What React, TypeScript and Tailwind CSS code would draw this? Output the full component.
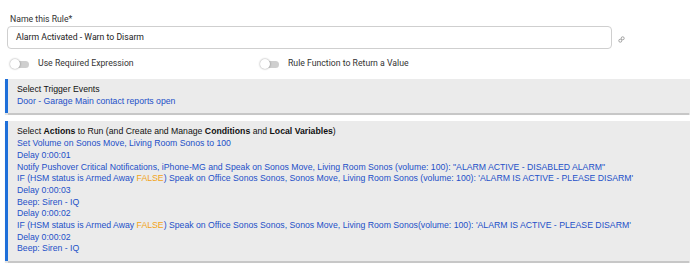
import React from 'react'

function Toggle({ label }: { label: string }) {
  return (
    <div className="flex items-center">
      <div className="relative w-[20px] h-[10px] flex items-center">
        <div className="ml-[3px] w-[16px] h-[7px] rounded-full bg-[#cfcfcf]" />
        <div className="absolute left-0 top-0 w-[10px] h-[10px] rounded-full bg-white shadow-[0_0_2px_rgba(0,0,0,0.45)]" />
      </div>
      <span className="ml-[8px] text-[8.7px] text-[#333]">{label}</span>
    </div>
  )
}

function Panel({ children, className }: { children: React.ReactNode; className?: string }) {
  return (
    <div
      className={`ml-[5px] bg-[#ebebeb] border-l-[3px] border-[#1e6fd9] shadow-[0_1.5px_1px_rgba(0,0,0,0.22)] pl-[9px] pr-2 text-[8.7px] leading-[11.7px] text-[#111] ${className ?? ''}`}
      style={{ fontFamily: '"Liberation Sans", Arial, sans-serif' }}
    >
      {children}
    </div>
  )
}

const Link = ({ children }: { children: React.ReactNode }) => (
  <div className="text-[#2350c8]">{children}</div>
)

const F = () => <span className="text-[#f2a316]">FALSE</span>

export default function App() {
  return (
    <div
      className="w-[690px] h-[266px] bg-white overflow-hidden"
      style={{ fontFamily: 'Roboto, "Liberation Sans", sans-serif' }}
    >
      <div className="pt-[13px] pl-[10px] text-[8.7px] leading-[12px] text-[#333]">Name this Rule*</div>
      <div className="flex items-center mt-[1px]">
        <div className="ml-[7px] w-[605px] h-[23px] border border-[#cfcfcf] rounded-[4px] flex items-center pl-[8px] text-[8.7px] text-[#222]">
          Alarm Activated - Warn to Disarm
        </div>
        <svg className="ml-[6px] mt-[3px]" width="7" height="7" viewBox="0 0 7 7" fill="none" stroke="#999" strokeWidth="0.9">
          <circle cx="2.3" cy="4.7" r="1.5" />
          <circle cx="4.7" cy="2.3" r="1.5" />
        </svg>
      </div>
      <div className="flex items-center mt-[10px] h-[10px] pl-[10px]">
        <div className="w-[250px]">
          <Toggle label="Use Required Expression" />
        </div>
        <Toggle label="Rule Function to Return a Value" />
      </div>
      <Panel className="mt-[10px] pt-[5px] pb-[6px]">
        <div>Select Trigger Events</div>
        <Link>Door - Garage Main contact reports open</Link>
      </Panel>
      <Panel className="mt-[8px] pt-[5px] pb-[6px]">
        <div>
          Select <b>Actions</b> to Run (and Create and Manage <b>Conditions</b> and <b>Local Variables</b>)
        </div>
        <Link>Set Volume on Sonos Move, Living Room Sonos to 100</Link>
        <Link>Delay 0:00:01</Link>
        <Link>
          Notify Pushover Critical Notifications, iPhone-MG and Speak on Sonos Move, Living Room Sonos (volume: 100): "ALARM ACTIVE - DISABLED ALARM"
        </Link>
        <Link>
          IF (HSM status is Armed Away <F />) Speak on Office Sonos Sonos, Sonos Move, Living Room Sonos (volume: 100): 'ALARM IS ACTIVE - PLEASE DISARM'
        </Link>
        <Link>Delay 0:00:03</Link>
        <Link>Beep: Siren - IQ</Link>
        <Link>Delay 0:00:02</Link>
        <Link>
          IF (HSM status is Armed Away <F />) Speak on Office Sonos Sonos, Sonos Move, Living Room Sonos(volume: 100): 'ALARM IS ACTIVE - PLEASE DISARM'
        </Link>
        <Link>Delay 0:00:02</Link>
        <Link>Beep: Siren - IQ</Link>
      </Panel>
    </div>
  )
}
